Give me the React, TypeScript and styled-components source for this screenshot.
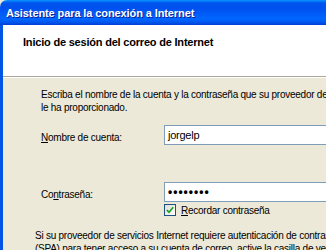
import React from 'react';
import styled, {createGlobalStyle} from 'styled-components';

const Global = createGlobalStyle`
  html, body {
    margin: 0;
    padding: 0;
    width: 326px;
    height: 250px;
    overflow: hidden;
    background: #ece9d8;
  }
`;

const Window = styled.div`
  width: 420px;
  height: 250px;
  display: flex;
  flex-direction: column;
  font-family: 'Liberation Sans', Arial, sans-serif;
  font-size: 10px;
  letter-spacing: -0.25px;
  color: #000;
`;

const TitleBar = styled.div`
  height: 25px;
  flex: none;
  display: flex;
  align-items: center;
  padding-left: 6px;
  border-top-left-radius: 7px;
  background: linear-gradient(
    to bottom,
    #0997ff 0px,
    #0053ee 3px,
    #0050ee 8px,
    #0066ff 19px,
    #0058f0 22px,
    #003dd7 25px
  );
  color: #fff;
  font-weight: bold;
  font-size: 11px;
  letter-spacing: -0.1px;
  text-shadow: 1px 1px 0 #0a1e9c;
`;

const Frame = styled.div`
  flex: 1;
  display: flex;
  flex-direction: column;
  border-left: 3px solid #0055e5;
  box-shadow: inset 1px 0 0 #166aee;
`;

const Header = styled.div`
  height: 52px;
  flex: none;
  background: #fff;
  padding: 11px 0 0 20px;
  box-sizing: border-box;
  font-weight: bold;
  font-size: 11px;
  letter-spacing: -0.2px;
  border-bottom: 1px solid #aca899;
`;

const Body = styled.div`
  flex: 1;
  background: #ece9d8;
  border-top: 1px solid #fff;
  padding: 10px 0 0 38px;
`;

const Intro = styled.p`
  margin: 0;
  line-height: 13px;
  white-space: nowrap;
`;

const Row = styled.div<{$top: number}>`
  display: flex;
  align-items: center;
  margin-top: ${p => p.$top}px;
`;

const Label = styled.label`
  width: 123px;
  flex: none;
  padding-top: 4px;
`;

const Key = styled.span`
  text-decoration: underline;
`;

const Field = styled.div`
  width: 200px;
  height: 20px;
  box-sizing: border-box;
  border: 1px solid #7f9db9;
  background: #fff;
  display: flex;
  align-items: center;
  padding-left: 3px;
  font-size: 11px;
`;

const Dots = styled.span`
  letter-spacing: 1px;
  font-size: 12px;
  font-weight: bold;
`;

const Check = styled.span`
  width: 12px;
  height: 12px;
  box-sizing: border-box;
  border: 1px solid #1c5180;
  background: linear-gradient(135deg, #dcdcd7, #fff);
  display: inline-flex;
  align-items: center;
  justify-content: center;
  margin-right: 5px;
`;

const CheckRow = styled.div`
  display: flex;
  align-items: center;
  margin: 2px 0 0 123px;
`;

const Note = styled.p`
  margin: 13px 0 0 -6px;
  line-height: 13px;
  white-space: nowrap;
`;

export default function App() {
  return (
    <>
      <Global />
      <Window>
        <TitleBar>Asistente para la conexión a Internet</TitleBar>
        <Frame>
          <Header>Inicio de sesión del correo de Internet</Header>
          <Body>
            <Intro>
              Escriba el nombre de la cuenta y la contraseña que su proveedor de servicios Internet
              <br />
              le ha proporcionado.
            </Intro>
            <Row $top={11}>
              <Label>
                <Key>N</Key>ombre de cuenta:
              </Label>
              <Field>jorgelp</Field>
            </Row>
            <Row $top={37}>
              <Label>
                Co<Key>n</Key>traseña:
              </Label>
              <Field>
                <Dots>••••••••</Dots>
              </Field>
            </Row>
            <CheckRow>
              <Check>
                <svg width="8" height="8" viewBox="0 0 8 8">
                  <path d="M0.8 4 L3 6.2 L7.2 1.2" fill="none" stroke="#21a121" strokeWidth="1.7" />
                </svg>
              </Check>
              <span>
                <Key>R</Key>ecordar contraseña
              </span>
            </CheckRow>
            <Note>
              Si su proveedor de servicios Internet requiere autenticación de contraseña segura
              <br />
              (SPA) para tener acceso a su cuenta de correo, active la casilla de verificación.
            </Note>
          </Body>
        </Frame>
      </Window>
    </>
  );
}
